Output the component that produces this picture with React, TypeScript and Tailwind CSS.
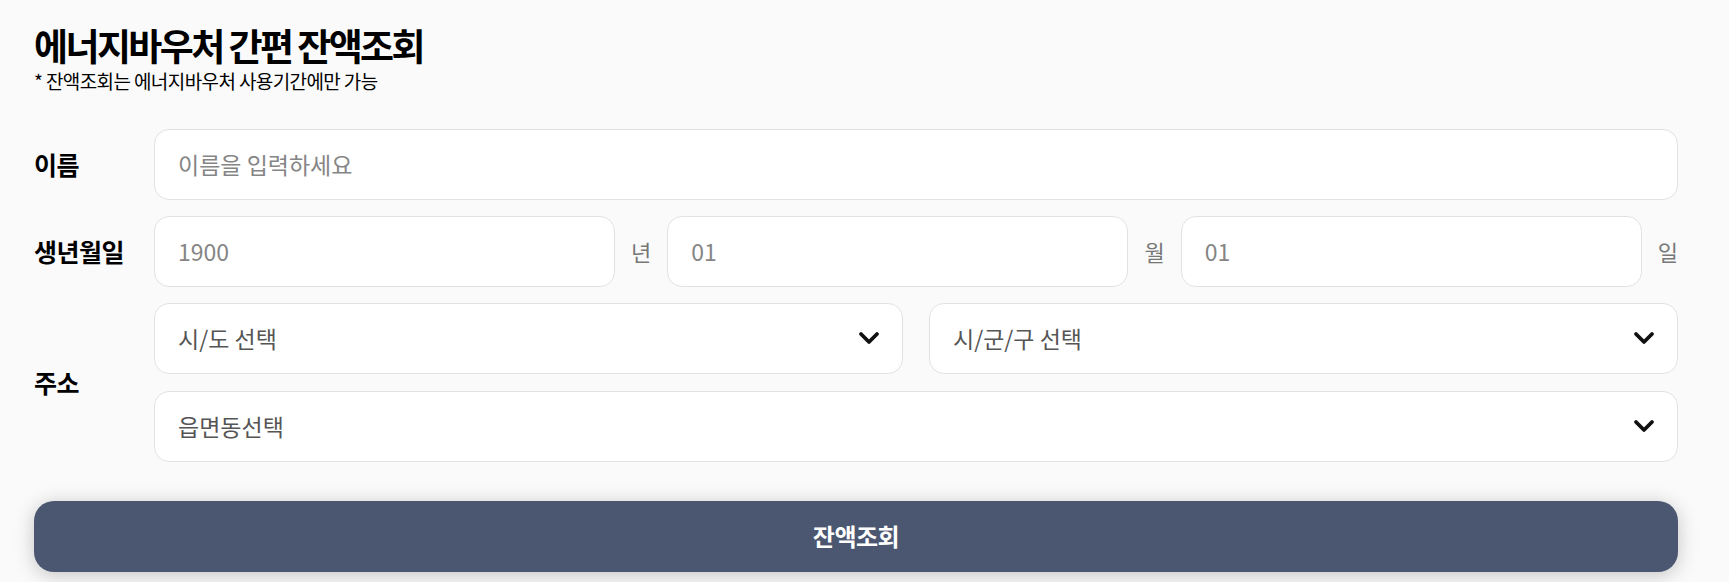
import React from "react";

const font = { fontFamily: '"Noto Sans CJK KR", "Noto Sans", sans-serif' };

function Chevron() {
  return (
    <svg width="22" height="14" viewBox="0 0 22 14" fill="none" className="shrink-0">
      <polyline points="3,3 11,11 19,3" stroke="#111" strokeWidth="3.8" strokeLinecap="round" strokeLinejoin="round" />
    </svg>
  );
}

function TextBox({ placeholder, className = "" }: { placeholder: string; className?: string }) {
  return (
    <input
      placeholder={placeholder}
      className={`h-[71px] min-w-0 rounded-[15px] border border-[#e2e2e2] bg-white px-[23px] text-[23px] text-[#333] outline-none placeholder:text-[#858585] ${className}`}
    />
  );
}

function SelectBox({ label, className = "" }: { label: string; className?: string }) {
  return (
    <div
      className={`flex h-[71px] min-w-0 items-center justify-between rounded-[15px] border border-[#e2e2e2] bg-white pl-[23px] pr-[22px] ${className}`}
    >
      <span className="text-[23px] text-[#555]">{label}</span>
      <Chevron />
    </div>
  );
}

export default function App() {
  return (
    <div className="min-h-screen bg-[#fafafa] pl-[34px] pr-[51px] pt-[21px] text-black" style={font}>
      <h1 className="text-[37px] font-bold leading-[1.3] tracking-[-0.07em]">에너지바우처 간편 잔액조회</h1>
      <p className="mt-[1px] text-[19px] leading-[1.2] tracking-[-0.6px]">* 잔액조회는 에너지바우처 사용기간에만 가능</p>

      <div className="mt-[36px] flex flex-col gap-[16px]">
        <div className="flex items-center">
          <div className="w-[120px] shrink-0 text-[25px] font-bold tracking-[-0.5px]">이름</div>
          <TextBox placeholder="이름을 입력하세요" className="flex-1" />
        </div>

        <div className="flex items-center">
          <div className="w-[120px] shrink-0 text-[25px] font-bold tracking-[-0.5px]">생년월일</div>
          <div className="flex flex-1 items-center gap-[16px]">
            <TextBox placeholder="1900" className="flex-1" />
            <span className="text-[22px] text-[#777]">년</span>
            <TextBox placeholder="01" className="flex-1" />
            <span className="text-[22px] text-[#777]">월</span>
            <TextBox placeholder="01" className="flex-1" />
            <span className="text-[22px] text-[#777]">일</span>
          </div>
        </div>

        <div className="flex items-center">
          <div className="w-[120px] shrink-0 text-[25px] font-bold tracking-[-0.5px]">주소</div>
          <div className="flex flex-1 flex-col gap-[17px]">
            <div className="flex gap-[26px]">
              <SelectBox label="시/도 선택" className="flex-1" />
              <SelectBox label="시/군/구 선택" className="flex-1" />
            </div>
            <SelectBox label="읍면동선택" />
          </div>
        </div>
      </div>

      <button className="mt-[39px] flex h-[71px] w-full items-center justify-center rounded-[20px] bg-[#4b5670] text-[24px] font-bold tracking-[-0.5px] text-white shadow-[0_3px_20px_rgba(0,0,0,0.22)]">
        잔액조회
      </button>
    </div>
  );
}
